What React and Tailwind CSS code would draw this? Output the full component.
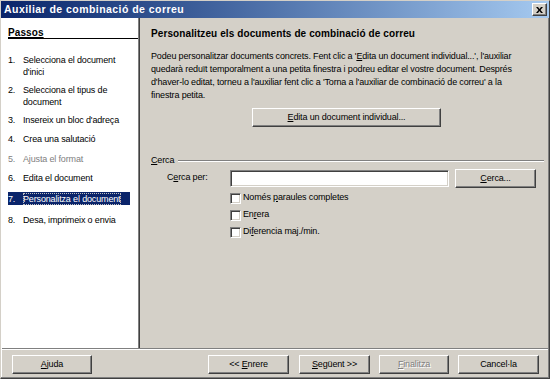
const btn =
  "h-[19px] bg-[#d4d0c8] border border-t-white border-l-white border-r-[#404040] border-b-[#404040] shadow-[inset_-1px_-1px_#808080] flex items-center justify-center leading-none";

function U({ children }) {
  return <span className="underline underline-offset-[1px]">{children}</span>;
}

function Check({ children }) {
  return (
    <div className="flex items-center h-[17px]">
      <div className="w-[11px] h-[11px] bg-white border border-t-[#808080] border-l-[#808080] border-r-white border-b-white shadow-[inset_1px_1px_#404040,inset_-1px_-1px_#d4d0c8]" />
      <span className="ml-[2px]">{children}</span>
    </div>
  );
}

const steps = [
  { n: "1.", t: ["Selecciona el document", "d'inici"], mt: "mt-[15px]" },
  { n: "2.", t: ["Selecciona el tipus de", "document"], mt: "mt-[6px]" },
  { n: "3.", t: ["Insereix un bloc d'adreça"], mt: "mt-[6px]" },
  { n: "4.", t: ["Crea una salutació"], mt: "mt-[7px]" },
  { n: "5.", t: ["Ajusta el format"], mt: "mt-[8px]", dim: true },
  { n: "6.", t: ["Edita el document"], mt: "mt-[7px]" },
  { n: "7.", t: ["Personalitza el document"], mt: "mt-[8px]", active: true },
  { n: "8.", t: ["Desa, imprimeix o envia"], mt: "mt-[9px]" },
];

export default function App() {
  return (
    <div
      className="w-[550px] h-[379px] bg-[#d4d0c8] flex flex-col border border-t-[#d4d0c8] border-l-[#d4d0c8] border-r-[#404040] border-b-[#404040] shadow-[inset_-1px_-1px_#808080,inset_1px_1px_white] text-[9px] tracking-[-0.15px] text-black"
      style={{ fontFamily: '"Liberation Sans", Arial, sans-serif' }}
    >
      {/* title bar */}
      <div className="h-[17px] flex items-center justify-between bg-gradient-to-r from-[#0a246a] to-[#a6caf0] pl-[3px] pr-[2px]">
        <span className="text-white font-bold text-[10.5px] tracking-[0.45px]">Auxiliar de combinació de correu</span>
        <div className="w-[15px] h-[13px] bg-[#d4d0c8] border border-t-white border-l-white border-r-[#404040] border-b-[#404040] shadow-[inset_-1px_-1px_#808080] flex items-center justify-center">
          <svg width="7" height="6" viewBox="0 0 7 6">
            <path d="M0 0h2l1.5 2L5 0h2L4.5 3 7 6H5L3.5 4 2 6H0l2.5-3z" fill="black" />
          </svg>
        </div>
      </div>

      {/* main */}
      <div className="flex flex-1 pl-px">
        <div className="w-[137px] bg-white border-r border-r-[#808080] pl-[6px] flex flex-col">
          <div className="pt-[9px] leading-[11px] font-bold text-[10px] tracking-[0.1px] border-b border-black">
            <span className="underline">Passos</span>
          </div>
          {steps.map((s) => (
            <div key={s.n} className={`${s.mt} flex leading-[12px] ${s.dim ? "text-[#808080]" : ""}`}>
              {s.active ? (
                <div className="flex bg-[#0a246a] text-white w-[122px] h-[13px] items-center">
                  <span className="w-[15px]">{s.n}</span>
                  <span className="outline-1 outline-dotted outline-[#c0c0c0] -outline-offset-1 pr-[1px]">{s.t[0]}</span>
                </div>
              ) : (
                <>
                  <span className="w-[15px] shrink-0">{s.n}</span>
                  <div>
                    {s.t.map((l) => (
                      <div key={l}>{l}</div>
                    ))}
                  </div>
                </>
              )}
            </div>
          ))}
        </div>
        <div className="w-px bg-[#404040]" />

        <div className="flex-1 pl-[11px] pr-[5px] pt-[9px] flex flex-col">
          <div className="font-bold text-[10px] tracking-[0.1px] leading-[13px]">
            Personalitzeu els documents de combinació de correu
          </div>
          <p className="mt-[10px] leading-[13px] whitespace-nowrap">
            Podeu personalitzar documents concrets. Fent clic a '<U>E</U>dita un document individual...', l'auxiliar
            <br />
            quedarà reduït temporalment a una petita finestra i podreu editar el vostre document. Després
            <br />
            d'haver-lo editat, torneu a l'auxiliar fent clic a 'Torna a l'auxiliar de combinació de correu' a la
            <br />
            finestra petita.
          </p>
          <div className="flex justify-center mt-[6px] pr-[2px]">
            <div className={`${btn} w-[189px]`}>
              <span>
                <U>E</U>dita un document individual...
              </span>
            </div>
          </div>

          <div className="mt-[27px] flex items-center">
            <span>
              <U>C</U>erca
            </span>
            <div className="flex-1 ml-[4px] border-t border-t-[#808080] border-b border-b-white" />
          </div>
          <div className="mt-px flex items-center">
            <span className="ml-[16px] w-[63px]">
              C<U>e</U>rca per:
            </span>
            <div className="w-[219px] h-[17px] bg-white border border-t-[#808080] border-l-[#808080] border-r-white border-b-white shadow-[inset_1px_1px_#404040,inset_-1px_-1px_#d4d0c8]" />
            <div className={`${btn} w-[81px] ml-[6px]`}>
              <span>
                <U>C</U>erca...
              </span>
            </div>
          </div>
          <div className="ml-[79px] mt-[2px] flex flex-col">
            <Check>
              Només <U>p</U>araules completes
            </Check>
            <Check>
              En<U>r</U>era
            </Check>
            <Check>
              Di<U>f</U>erencia maj./min.
            </Check>
          </div>
        </div>
      </div>

      {/* separator */}
      <div className="mx-px border-t border-t-[#808080] border-b border-b-white" />

      {/* buttons */}
      <div className="h-[28px] flex items-start pt-[5px] pl-[11px]">
        <div className={`${btn} w-[80px]`}>
          <span>
            <U>A</U>juda
          </span>
        </div>
        <div className={`${btn} w-[81px] ml-[116px]`}>
          <span>
            &lt;&lt; <U>E</U>nrere
          </span>
        </div>
        <div className={`${btn} w-[71px] ml-[10px]`}>
          <span>
            <U>S</U>egüent &gt;&gt;
          </span>
        </div>
        <div className={`${btn} w-[70px] ml-[9px] text-[#808080] [text-shadow:1px_1px_white]`}>
          <span>
            <U>F</U>inalitza
          </span>
        </div>
        <div className={`${btn} w-[81px] ml-[9px]`}>
          <span>Cancel·la</span>
        </div>
      </div>
    </div>
  );
}
